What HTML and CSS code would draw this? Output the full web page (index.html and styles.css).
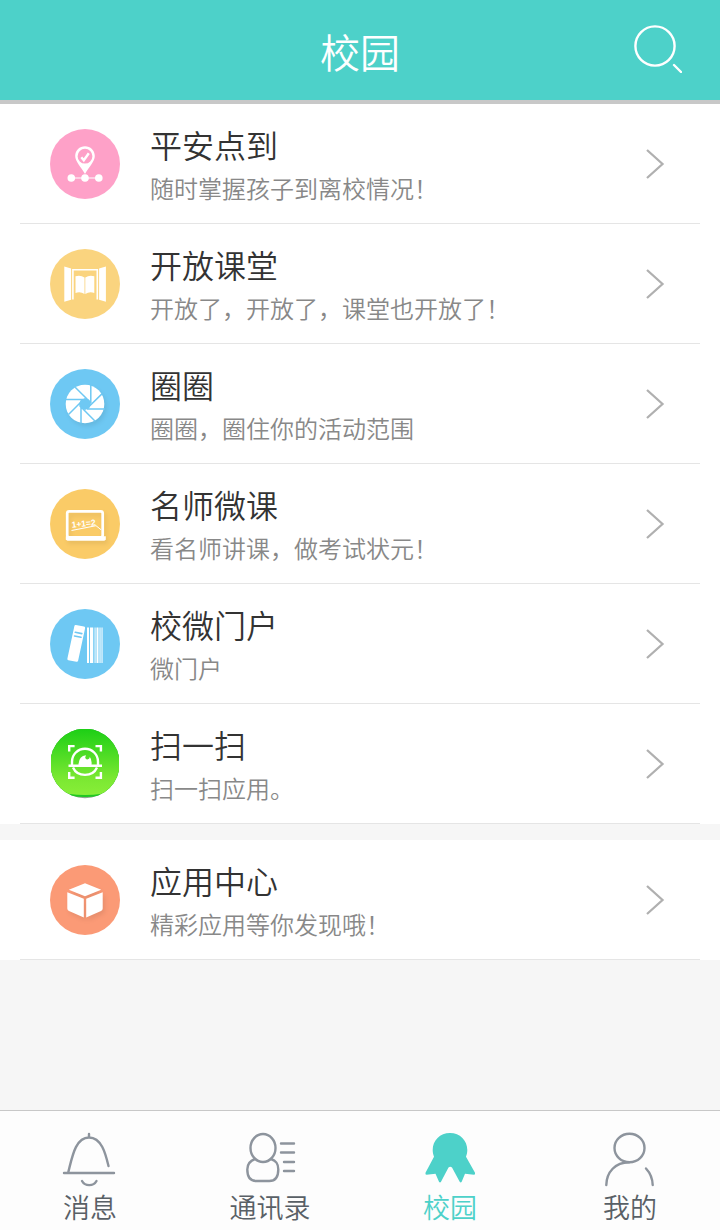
FILE: index.html
```html
<!DOCTYPE HTML>
<html lang="zh-CN">
<head>
<meta charset="utf-8">
<title>校园</title>
<link rel="stylesheet" href="styles.css">
</head>

<body>
<div class="header">
	<h1 class="title">校园</h1>
	<svg class="search" width="52" height="52" viewBox="0 0 52 52">
		<circle cx="25" cy="25" r="19.6"/>
		<path d="M44 44l7 7"/>
	</svg>
</div>

<ul class="list">
	<li class="item">
		<svg class="icon" viewBox="0 0 70 70">
			<circle cx="35" cy="35" r="35" fill="#fea1c8"/>
			<path fill="#fff" fill-rule="evenodd" d="M35 17.2c-5.4 0-9.8 4.2-9.8 9.7 0 5.200 5.500 10.500 9.800 18.100 4.300-7.600 9.800-12.900 9.800-18.100 0-5.500-4.400-9.700-9.800-9.700zM35 19.800a7.400 7.400 0 1 1 0 14.800a7.400 7.400 0 1 1 0-14.800z"/>
			<path d="M31.300 28.200l2.500 3 5-7" fill="none" stroke="#fff" stroke-width="2.400"/>
			<path d="M21 49h28" stroke="#fff" stroke-width="1"/>
			<g fill="#fff"><circle cx="21.300" cy="49" r="3.800"/><circle cx="35" cy="49" r="3.800"/><circle cx="48.800" cy="49" r="3.800"/></g>
		</svg>
		<div class="text">
			<h2>平安点到</h2>
			<p>随时掌握孩子到离校情况！</p>
		</div>
		<svg class="arrow" viewBox="0 0 20 32"><path d="M2 2l15.500 14L2 30"/></svg>
	</li>
	<li class="item">
		<svg class="icon" viewBox="0 0 70 70">
			<circle cx="35" cy="35" r="35" fill="#fad47f"/>
			<g fill="#fff">
				<path d="M14.300 17.500l6.800 2v31.200l-6.800 2zM55.900 17.500l-6.800 2v31.200l6.800 2z"/>
				<path d="M25.500 27.200q5-1.500 9 1.200v16.500q-4-2.500-9-1zM44.300 27.200q-5-1.500-9 1.200v16.500q4-2.500 9-1z"/>
			</g>
			<path d="M22.900 50.500V20.800h24.400v29.700" fill="none" stroke="#fff" stroke-width="1.600"/>
		</svg>
		<div class="text">
			<h2>开放课堂</h2>
			<p>开放了，开放了，课堂也开放了！</p>
		</div>
		<svg class="arrow" viewBox="0 0 20 32"><path d="M2 2l15.500 14L2 30"/></svg>
	</li>
	<li class="item">
		<svg class="icon" viewBox="0 0 70 70">
			<circle cx="35" cy="35" r="35" fill="#6ec8f3"/>
			<circle class="shade" cx="35" cy="35" r="19.300" fill="#fff"/>
			<path fill="#6ec8f3" d="M35 29l4.200 1.800 1.800 4.200-1.800 4.200-4.200 1.800-4.200-1.800-1.800-4.200 1.800-4.200z"/>
			<!-- shutter blades -->
			<path d="M25.200 18.200L41 34M40.800 15.500V34M52.200 24.600L37 39.500M55 40H37M45.200 52.200L29.500 36.500M31 54.500V36M18.500 45.500L33 31M15 30.500h18" fill="none" stroke="#6ec8f3" stroke-width="1.500"/>
		</svg>
		<div class="text">
			<h2>圈圈</h2>
			<p>圈圈，圈住你的活动范围</p>
		</div>
		<svg class="arrow" viewBox="0 0 20 32"><path d="M2 2l15.500 14L2 30"/></svg>
	</li>
	<li class="item">
		<svg class="icon" viewBox="0 0 70 70">
			<circle cx="35" cy="35" r="35" fill="#facb67"/>
			<g class="shade">
				<rect x="17.200" y="22.300" width="35.500" height="26" rx="2" fill="none" stroke="#fff" stroke-width="2.700"/>
				<path d="M15.800 47.200h40v3.500l-1.500 1H17.500l-1.700-1z" fill="#fff"/>
			</g>
			<text class="sum" x="22" y="38.700" transform="rotate(-6 22 39)">1+1=2</text>
			<path d="M21.500 41.500l24.500-4.800 5 4" fill="none" stroke="#fff" stroke-width="1"/>
		</svg>
		<div class="text">
			<h2>名师微课</h2>
			<p>看名师讲课，做考试状元！</p>
		</div>
		<svg class="arrow" viewBox="0 0 20 32"><path d="M2 2l15.500 14L2 30"/></svg>
	</li>
	<li class="item">
		<svg class="icon" viewBox="0 0 70 70">
			<circle cx="35" cy="35" r="35" fill="#6ec8f3"/>
			<path d="M25.800 16l8.200 1.500q1.400.3 1.100 1.700l-7 32.500q-.3 1.400-1.700 1.100l-8-1.500q-1.300-.3-1-1.700l7-32.500q.3-1.300 1.400-1.100z" fill="#fff"/>
			<path d="M25.300 23.300l6.500 1.300M24.500 27l6.500 1.300" stroke="#6ec8f3" stroke-width="1.600" stroke-linecap="round"/>
			<path fill="#fff" d="M37 18.500h2V54h-2zM40 18.500h3V54h-3zM46.500 18.500h2V54h-2z"/>
			<path fill="#fff" opacity=".7" d="M43.700 18.500h.9V54h-.9zM45 18.500h.8V54H45zM49.300 18.500h1.500V54h-1.500zM51.300 18.500h1.500V54h-1.500z"/>
		</svg>
		<div class="text">
			<h2>校微门户</h2>
			<p>微门户</p>
		</div>
		<svg class="arrow" viewBox="0 0 20 32"><path d="M2 2l15.500 14L2 30"/></svg>
	</li>
	<li class="item">
		<svg class="icon" viewBox="0 0 70 70">
			<defs>
				<linearGradient id="green" x1="0" y1="0" x2="0" y2="1">
					<stop offset="0" stop-color="#1dcf16"/>
					<stop offset=".75" stop-color="#7be832"/>
					<stop offset="1" stop-color="#88ee38"/>
				</linearGradient>
				<clipPath id="round"><circle cx="35" cy="34.500" r="34.700"/></clipPath>
			</defs>
			<g clip-path="url(#round)">
				<rect x="1" y="0" width="68" height="70" fill="#8fa58f"/>
				<path d="M1 0h68v62Q52 68 35 68T1 62z" fill="#20c822"/>
				<path d="M1 0h68v61Q52 66 35 66T1 61z" fill="url(#green)"/>
			</g>
			<g fill="none" stroke="#fff" stroke-width="2.400">
				<path d="M19.200 22.500v-5.400h5.400M45.500 17.100h5.400v5.400M19.200 43v5.700h5.400M45.500 48.700h5.400V43"/>
				<path d="M22 36v-3.300a13 13 0 0 1 26 0V36M23 38.500a13 12 0 0 0 24 0"/>
			</g>
			<path d="M18.500 35.500h33.500v2.400H18.500z" fill="#fff"/>
			<path d="M28.500 36q.2-9.200 7.500-9.800l-.8 2.200q.5 2.500 2.800 1.900 2-.6 1.700-2.500 2.500 3 1.800 8.200z" fill="#fff"/>
		</svg>
		<div class="text">
			<h2>扫一扫</h2>
			<p>扫一扫应用。</p>
		</div>
		<svg class="arrow" viewBox="0 0 20 32"><path d="M2 2l15.500 14L2 30"/></svg>
	</li>
</ul>

<ul class="list">
	<li class="item">
		<svg class="icon" viewBox="0 0 70 70">
			<circle cx="35" cy="35" r="35" fill="#fb9a76"/>
			<path class="shade" fill="#fff" d="M35 18.300l16.200 6.500L35 31.300l-16.200-6.500zM17.300 27.200l16.500 6.500v18.800L19 46q-1.700-.8-1.700-2.500zM52.700 27.200l-16.500 6.500v18.800L51 46q1.700-.8 1.700-2.500z"/>
		</svg>
		<div class="text">
			<h2>应用中心</h2>
			<p>精彩应用等你发现哦！</p>
		</div>
		<svg class="arrow" viewBox="0 0 20 32"><path d="M2 2l15.500 14L2 30"/></svg>
	</li>
</ul>

<div class="tabs">
	<div class="tab">
		<svg viewBox="0 0 60 60">
			<path d="M8.200 42.500C12 28 15 7.500 29 7.500c12.500 0 16.500 16 19.500 28.500M29 4v3M4 43h50M22 51c3 5.500 11.500 5.500 14.500 0"/>
		</svg>
		<span>消息</span>
	</div>
	<div class="tab">
		<svg viewBox="0 0 60 60">
			<ellipse cx="23" cy="18" rx="12.500" ry="14"/>
			<path d="M15 29c-5.500 2-7.700 5-7.700 10.500 0 7.500 2.500 11.500 9 11.500h13c6.500 0 9-4 9-11.500 0-5.500-1.700-8.500-7.300-10.500M41 13.500h13M41 22.500h13M44 32h10M44 41h10"/>
		</svg>
		<span>通讯录</span>
	</div>
	<div class="tab active">
		<svg viewBox="0 0 60 60">
			<path d="M30 3c10 0 17.300 7.500 17.300 17 0 2.500-.5 4.500-1.300 6.700l9 16q.5 2-1 2l-9-1-3.300 8q-1 1.500-2 0L32 37.500q-1.800-1.500-3.500 0L21 51.700q-1 1.500-2 0l-3.500-8-9 1q-1.500 0-1-2l8.500-16c-.8-2.200-1.300-4.200-1.300-6.700C12.700 10.500 20 3 30 3z"/>
		</svg>
		<span>校园</span>
	</div>
	<div class="tab">
		<svg viewBox="0 0 60 60">
			<ellipse cx="29.500" cy="18" rx="15" ry="14.200"/>
			<path d="M29 32.200C15.500 32.200 6.500 42 6.300 55M46 38.500c4.200 4.500 6.500 10 6.700 16.500"/>
		</svg>
		<span>我的</span>
	</div>
</div>
</body>
</html>
```
FILE: styles.css
```css
*{
	box-sizing:border-box;
}

body{
	margin:0;
	height:1230px;
	display:flex;
	flex-direction:column;
	background:#f6f6f6;
	font-family:"Noto Sans CJK SC", sans-serif;
	font-weight:350;
}

h1, h2, p, ul{
	margin:0;
	padding:0;
	font-weight:inherit;
}

.header{
	display:grid;
	grid-template-columns:1fr auto 1fr;
	align-items:center;
	height:104px;
	padding:0 38px 6px 38px;
	background:#4dd1c9;
	border-bottom:4px solid #c8c8c8;
}

.title{
	grid-column:2;
	color:#fff;
	font-size:40px;
	line-height:60px;
	padding-top:8px;
}

.search{
	justify-self:end;
	fill:none;
	stroke:#fff;
	stroke-width:2.4;
	stroke-linecap:round;
}

.list{
	list-style:none;
	padding:0 20px;
	margin-bottom:16px;
	background:#fff;
}

.item{
	display:flex;
	align-items:center;
	height:120px;
	padding:0 35px 0 30px;
	border-bottom:1px solid #e5e5e5;
}

.icon{
	width:70px;
	height:70px;
	margin-right:30px;
}

.shade{
	filter:drop-shadow(2px 3px 2px rgba(0, 0, 0, 0.08));
}

.sum{
	fill:#fff;
	font:bold 8.5px "Liberation Sans", Arial, sans-serif;
}

.text{
	flex:1;
}

.text h2{
	color:#333;
	font-size:32px;
	line-height:48px;
}

.text p{
	color:#888;
	font-size:24px;
	line-height:40px;
}

.arrow{
	width:20px;
	height:32px;
	fill:none;
	stroke:#b0b0b0;
	stroke-width:2.3;
}

.tabs{
	display:flex;
	height:120px;
	margin-top:auto;
	background:#fdfdfd;
	border-top:1px solid #c8c8c8;
}

.tab{
	flex:1;
	display:flex;
	flex-direction:column;
	align-items:center;
	padding-top:19px;
	color:#596066;
	font-size:27px;
	line-height:34px;
}

.tab svg{
	width:60px;
	height:60px;
	fill:none;
	stroke:#8d949d;
	stroke-width:2.4;
	stroke-linecap:round;
}

.active{
	color:#4dd1c9;
}

.active svg{
	fill:#4dd1c9;
	stroke:none;
}
```
